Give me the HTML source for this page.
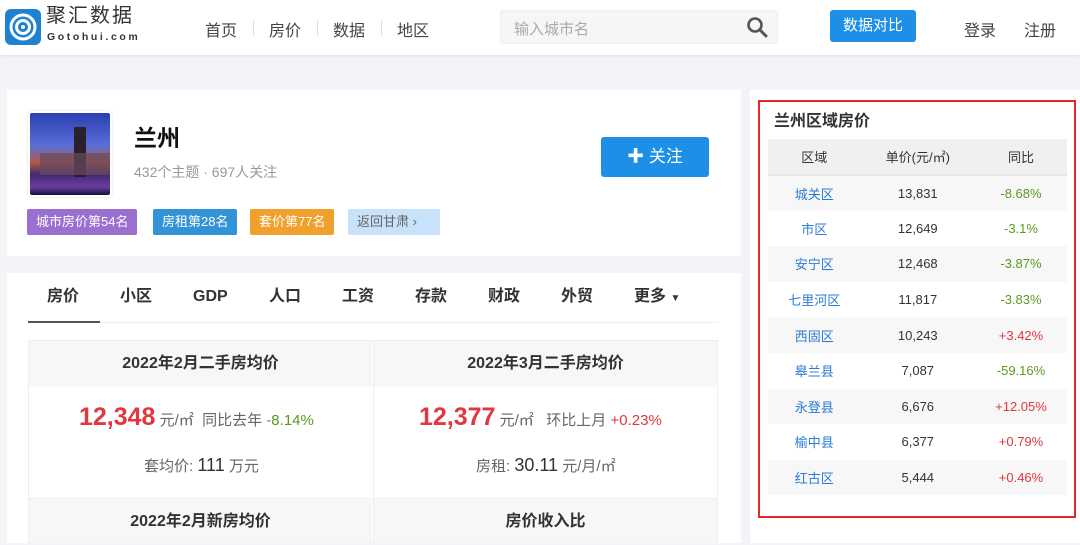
<!DOCTYPE html>
<html><head><meta charset="utf-8"><style>
*{margin:0;padding:0;box-sizing:border-box}
body{width:1080px;height:543px;overflow:hidden;background:#f3f4f7;font-family:"Liberation Sans","Noto Sans CJK SC",sans-serif;color:#333;position:relative}
.hdr{position:absolute;left:0;top:0;width:1080px;height:55px;background:#fff;box-shadow:0 1px 3px rgba(0,0,0,.08)}
.abs{position:absolute}
.nav{top:17px;font-size:16px;color:#444}
.sep{top:20px;width:1px;height:16px;background:#ddd}
.card{position:absolute;background:#fff}
.tag{position:absolute;top:209px;height:26px;line-height:26px;font-size:13px;color:#fff;padding:0 9px;border-radius:2px}
.tab{position:absolute;top:286px;height:22px;line-height:22px;font-size:16px;font-weight:bold;color:#333}
table{border-collapse:collapse;width:299px;font-size:13px;text-align:center}
td,th{height:35.6px}
th{font-weight:normal;color:#333;background:#f0f0f0;border-bottom:2px solid #e6e6e6;height:36px}
tr:nth-child(even) td{background:#f7f7f7}
.b{color:#2b7bd6}.g{color:#5a9a1e}.r{color:#e0383e}
.cellh{position:absolute;background:#f7f7f7;font-weight:bold;font-size:16px;text-align:center;color:#333}
</style></head><body>
<div class="hdr">
 <div class="abs" style="left:5px;top:9px;width:36px;height:36px;background:#1f82d0;border-radius:6px">
  <svg width="36" height="36" viewBox="0 0 36 36"><circle cx="18" cy="18" r="12" fill="none" stroke="#fff" stroke-width="3"/><circle cx="18" cy="18" r="6.5" fill="none" stroke="#fff" stroke-width="3"/><circle cx="18" cy="18" r="2" fill="#fff"/></svg>
 </div>
 <div class="abs" style="left:46px;top:4px;font-size:20px;line-height:24px;color:#333;letter-spacing:2px">聚汇数据</div>
 <div class="abs" style="left:47px;top:31px;font-size:10.5px;line-height:12px;color:#333;letter-spacing:2.6px;font-weight:bold">Gotohui.com</div>
 <div class="abs nav" style="left:205px">首页</div><div class="abs sep" style="left:253px"></div>
 <div class="abs nav" style="left:269px">房价</div><div class="abs sep" style="left:317px"></div>
 <div class="abs nav" style="left:333px">数据</div><div class="abs sep" style="left:381px"></div>
 <div class="abs nav" style="left:397px">地区</div>
 <div class="abs" style="left:500px;top:10px;width:278px;height:34px;background:#f6f6f6;border:1px solid #eee;border-radius:3px"></div>
 <div class="abs" style="left:514px;top:18px;font-size:15px;color:#aaa">输入城市名</div>
 <svg class="abs" style="left:746px;top:16px" width="22" height="22" viewBox="0 0 22 22"><circle cx="9" cy="9" r="6.5" fill="none" stroke="#555" stroke-width="2.6"/><line x1="14" y1="14" x2="20" y2="20" stroke="#555" stroke-width="3" stroke-linecap="round"/></svg>
 <div class="abs" style="left:830px;top:10px;width:86px;height:32px;background:#1e8fe6;border-radius:3px;color:#fff;font-size:15px;text-align:center;line-height:32px">数据对比</div>
 <div class="abs nav" style="left:964px">登录</div>
 <div class="abs nav" style="left:1024px">注册</div>
</div>

<div class="card" style="left:7px;top:90px;width:734px;height:166px"></div>
<div class="abs" style="left:28px;top:111px;width:84px;height:86px;border:2px solid #fff;border-radius:4px;box-shadow:0 0 2px #ddd;overflow:hidden;background:linear-gradient(#2a3fb0 0%,#5a6fd8 40%,#b05a40 60%,#402a70 75%,#6a3ea0 90%,#1a1040 100%)">
 <div class="abs" style="left:44px;top:14px;width:12px;height:50px;background:#2a2030"></div>
 <div class="abs" style="left:10px;top:40px;width:70px;height:22px;background:#6a4a60;opacity:.7"></div>
</div>
<div class="abs" style="left:134px;top:119px;font-size:23px;font-weight:bold;color:#111">兰州</div>
<div class="abs" style="left:134px;top:162px;font-size:14px;color:#999">432个主题 · 697人关注</div>
<div class="tag" style="left:27px;background:#9a6fd0">城市房价第54名</div>
<div class="tag" style="left:153px;background:#3293d6">房租第28名</div>
<div class="tag" style="left:250px;background:#f0a02c">套价第77名</div>
<div class="tag" style="left:348px;background:#c9e2fb;color:#666;width:92px">返回甘肃 ›</div>
<div class="abs" style="left:601px;top:137px;width:108px;height:40px;background:#1e8fe6;border-radius:3px;color:#fff;font-size:17px;text-align:center;line-height:40px">✚ 关注</div>

<div class="card" style="left:7px;top:273px;width:734px;height:270px"></div>
<div class="tab" style="left:47px">房价</div>
<div class="tab" style="left:120px">小区</div>
<div class="tab" style="left:193px">GDP</div>
<div class="tab" style="left:269px">人口</div>
<div class="tab" style="left:342px">工资</div>
<div class="tab" style="left:415px">存款</div>
<div class="tab" style="left:488px">财政</div>
<div class="tab" style="left:561px">外贸</div>
<div class="tab" style="left:634px">更多 <span style="font-size:10px">▼</span></div>
<div class="abs" style="left:28px;top:322px;width:690px;height:1px;background:#eee"></div>
<div class="abs" style="left:28px;top:321px;width:72px;height:2px;background:#555"></div>

<div class="abs" style="left:28px;top:340px;width:690px;height:203px;border:1px solid #eee"></div>
<div class="abs" style="left:373px;top:340px;width:1px;height:203px;background:#eee"></div>
<div class="cellh" style="left:29px;top:341px;width:343px;height:46px;line-height:46px">2022年2月二手房均价</div>
<div class="cellh" style="left:374px;top:341px;width:343px;height:46px;line-height:46px">2022年3月二手房均价</div>
<div class="cellh" style="left:29px;top:499px;width:343px;height:44px;line-height:46px">2022年2月新房均价</div>
<div class="cellh" style="left:374px;top:499px;width:343px;height:44px;line-height:46px">房价收入比</div>
<div class="abs" style="left:29px;top:498px;width:688px;height:1px;background:#eee"></div>
<div class="abs" style="left:79px;top:403px;font-size:15px;color:#666;white-space:nowrap"><span class="r" style="font-size:25px;font-weight:bold">12,348</span> 元/㎡ &nbsp;同比去年 <span class="g">-8.14%</span></div>
<div class="abs" style="left:419px;top:403px;font-size:15px;color:#666;white-space:nowrap"><span class="r" style="font-size:25px;font-weight:bold">12,377</span> 元/㎡ &nbsp;&nbsp;环比上月 <span class="r">+0.23%</span></div>
<div class="abs" style="left:144px;top:455px;font-size:15px;color:#666">套均价: <span style="font-size:18px;color:#333">111</span> 万元</div>
<div class="abs" style="left:476px;top:455px;font-size:15px;color:#666">房租: <span style="font-size:18px;color:#333">30.11</span> 元/月/㎡</div>

<div class="card" style="left:750px;top:90px;width:330px;height:453px"></div>
<div class="abs" style="left:758px;top:100px;width:318px;height:418px;border:2px solid #e8252b"></div>
<div class="abs" style="left:774px;top:107px;font-size:16px;font-weight:bold;color:#333">兰州区域房价</div>
<div class="abs" style="left:768px;top:139px">
<table>
<tr><th>区域</th><th>单价(元/㎡)</th><th>同比</th></tr>
<tr><td class="b">城关区</td><td>13,831</td><td class="g">-8.68%</td></tr>
<tr><td class="b">市区</td><td>12,649</td><td class="g">-3.1%</td></tr>
<tr><td class="b">安宁区</td><td>12,468</td><td class="g">-3.87%</td></tr>
<tr><td class="b">七里河区</td><td>11,817</td><td class="g">-3.83%</td></tr>
<tr><td class="b">西固区</td><td>10,243</td><td class="r">+3.42%</td></tr>
<tr><td class="b">皋兰县</td><td>7,087</td><td class="g">-59.16%</td></tr>
<tr><td class="b">永登县</td><td>6,676</td><td class="r">+12.05%</td></tr>
<tr><td class="b">榆中县</td><td>6,377</td><td class="r">+0.79%</td></tr>
<tr><td class="b">红古区</td><td>5,444</td><td class="r">+0.46%</td></tr>
</table></div>
</body></html>
